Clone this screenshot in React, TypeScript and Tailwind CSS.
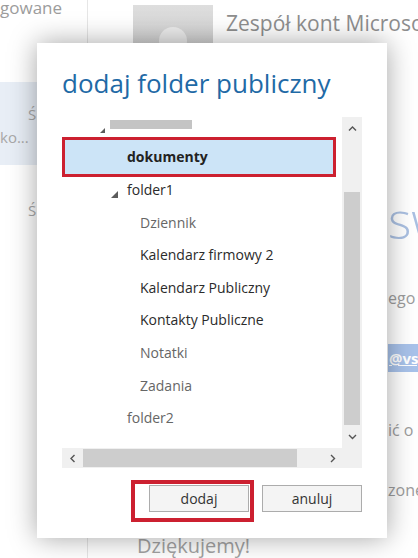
import React from "react";

type Row = {
  label?: string;
  level: 0 | 1 | 2;
  arrow?: boolean;
  muted?: boolean;
  selected?: boolean;
};

const rows: Row[] = [
  { level: 0, arrow: true },
  { label: "dokumenty", level: 1, selected: true },
  { label: "folder1", level: 1, arrow: true },
  { label: "Dziennik", level: 2, muted: true },
  { label: "Kalendarz firmowy 2", level: 2 },
  { label: "Kalendarz Publiczny", level: 2 },
  { label: "Kontakty Publiczne", level: 2 },
  { label: "Notatki", level: 2, muted: true },
  { label: "Zadania", level: 2, muted: true },
  { label: "folder2", level: 1, muted: true },
];

function Chevron({ dir }: { dir: "up" | "down" | "left" | "right" }) {
  const paths = {
    up: "M1 5.5 L4.5 2 L8 5.5",
    down: "M1 2 L4.5 5.5 L8 2",
    left: "M5.5 1 L2 4.5 L5.5 8",
    right: "M2 1 L5.5 4.5 L2 8",
  };
  const vertical = dir === "up" || dir === "down";
  return (
    <svg
      width={vertical ? 9 : 7}
      height={vertical ? 7 : 9}
      viewBox={vertical ? "0 0 9 7" : "0 0 7 9"}
    >
      <path d={paths[dir]} fill="none" stroke="#555" strokeWidth="1.4" />
    </svg>
  );
}

function Expander({ size }: { size: number }) {
  return (
    <svg width={size} height={size} viewBox="0 0 6 6">
      <polygon points="6,0 6,6 0,6" fill="#5c5c5c" />
    </svg>
  );
}

function TreeRow({ row }: { row: Row }) {
  if (row.level === 0) {
    return (
      <div className="flex h-[32.6px] items-center pl-[38px]">
        <div className="mt-[12px] w-[10px]">
          <Expander size={5} />
        </div>
        <div className="h-[9px] w-[82px] bg-[#c4c4c4]" />
      </div>
    );
  }

  if (row.selected) {
    return (
      <div className="-my-[1px] ml-[3px] flex h-[34.6px] w-[268px] items-center bg-[#cce4f7] pl-[62px] text-[14px] font-bold text-[#222] ring-[3px] ring-[#cc2030]">
        {row.label}
      </div>
    );
  }

  const color = row.muted ? "text-[#666]" : "text-[#2b2b2b]";

  if (row.arrow) {
    return (
      <div className={`flex h-[32.6px] items-center pl-[49px] text-[14px] ${color}`}>
        <div className="mt-[10px] w-[16px]">
          <Expander size={7} />
        </div>
        {row.label}
      </div>
    );
  }

  return (
    <div
      className={`flex h-[32.6px] items-center text-[14px] ${color} ${
        row.level === 2 ? "pl-[78px]" : "pl-[65px]"
      }`}
    >
      {row.label}
    </div>
  );
}

export default function App() {
  return (
    <div className="relative flex h-[558px] w-[418px] overflow-hidden bg-white font-['Open_Sans','Noto_Sans',sans-serif]">
      {/* page behind the dialog */}
      <div className="flex w-[88px] shrink-0 flex-col border-r border-[#e6e6e6] whitespace-nowrap">
        <div className="-mt-[2px] text-[17px] leading-[20px] text-[#9c9c9c]">gowane</div>
        <div className="mt-[64px] flex h-[83px] flex-col bg-[#e8eef6] pt-[22px]">
          <div className="pl-[28px] text-[15px] leading-[20px] text-[#a8a8a8]">Ś</div>
          <div className="mt-[3px] text-[15px] leading-[20px] text-[#a8a8a8]">ko...</div>
        </div>
        <div className="mt-[35px] pl-[28px] text-[15px] leading-[20px] text-[#a8a8a8]">Ś</div>
      </div>

      <div className="flex min-w-0 flex-1 flex-col whitespace-nowrap">
        <div className="flex gap-[13px] pl-[45px] pt-[5px]">
          <div className="flex h-[80px] w-[80px] shrink-0 justify-center bg-gradient-to-b from-[#dedede] to-[#c6c6c6]">
            <div className="mt-[22px] h-[28px] w-[28px] rounded-full bg-[#ececec]" />
          </div>
          <div className="pt-[4px] text-[21px] leading-[28px] text-[#8e8e8e]">Zespół kont Microsoft</div>
        </div>
        <div className="ml-[300px] mt-[110px] text-[50px] font-light leading-[50px] text-[#aac0e2]">sw</div>
        <div className="ml-[300px] mt-[43px] text-[16px] leading-[20px] text-[#9c9c9c]">ego</div>
        <div className="ml-[300px] mt-[36px] flex h-[28px] items-center bg-[#a8c2ea] pl-[1px] text-[15px] font-bold text-white underline">
          @vsystems.pl
        </div>
        <div className="ml-[300px] mt-[48px] text-[16px] leading-[20px] text-[#9c9c9c]">ić o</div>
        <div className="ml-[300px] mt-[40px] text-[16px] leading-[20px] text-[#9c9c9c]">zone</div>
        <div className="ml-[49px] mt-[34px] text-[20px] leading-[24px] text-[#a2a2a2]">Dziękujemy!</div>
      </div>

      {/* dialog */}
      <div className="absolute left-[37px] top-[43px] flex h-[495px] w-[350px] flex-col bg-white px-[25px] shadow-[0_0_26px_rgba(0,0,0,0.36)]">
        <h1 className="pt-[23px] text-[26px] leading-[34px] text-[#1f6aa6]">dodaj folder publiczny</h1>

        <div className="mt-[17px] flex h-[351px] flex-col">
          <div className="flex h-[331px]">
            <div className="flex-1 overflow-hidden bg-white">
              <div className="-mt-[9px] flex flex-col whitespace-nowrap">
                {rows.map((row, i) => (
                  <TreeRow key={i} row={row} />
                ))}
              </div>
            </div>
            <div className="flex w-[20px] flex-col bg-[#f0f0f0]">
              <div className="flex h-[22px] items-center justify-center">
                <Chevron dir="up" />
              </div>
              <div className="h-[53px]" />
              <div className="mx-[2px] h-[233px] bg-[#cdcdcd]" />
              <div className="flex flex-1 items-center justify-center">
                <Chevron dir="down" />
              </div>
            </div>
          </div>
          <div className="flex h-[20px] bg-[#f0f0f0]">
            <div className="flex w-[20px] items-center justify-center">
              <Chevron dir="left" />
            </div>
            <div className="my-[1px] ml-[1px] w-[214px] bg-[#cdcdcd]" />
            <div className="flex-1" />
            <div className="flex w-[20px] items-center justify-center">
              <Chevron dir="right" />
            </div>
            <div className="w-[20px]" />
          </div>
        </div>

        <div className="mt-[12px] flex items-start justify-end gap-[8px]">
          <div className="border-[4px] border-[#cc2030] pb-[6px] pl-[14px] pr-[1px] pt-[1px]">
            <button
              type="button"
              className="h-[27px] w-[100px] border border-[#acacac] bg-[#f4f4f4] text-[14px] text-[#333]"
            >
              dodaj
            </button>
          </div>
          <button
            type="button"
            className="mt-[5px] h-[27px] w-[100px] border border-[#acacac] bg-[#f4f4f4] text-[14px] text-[#333]"
          >
            anuluj
          </button>
        </div>
      </div>
    </div>
  );
}
